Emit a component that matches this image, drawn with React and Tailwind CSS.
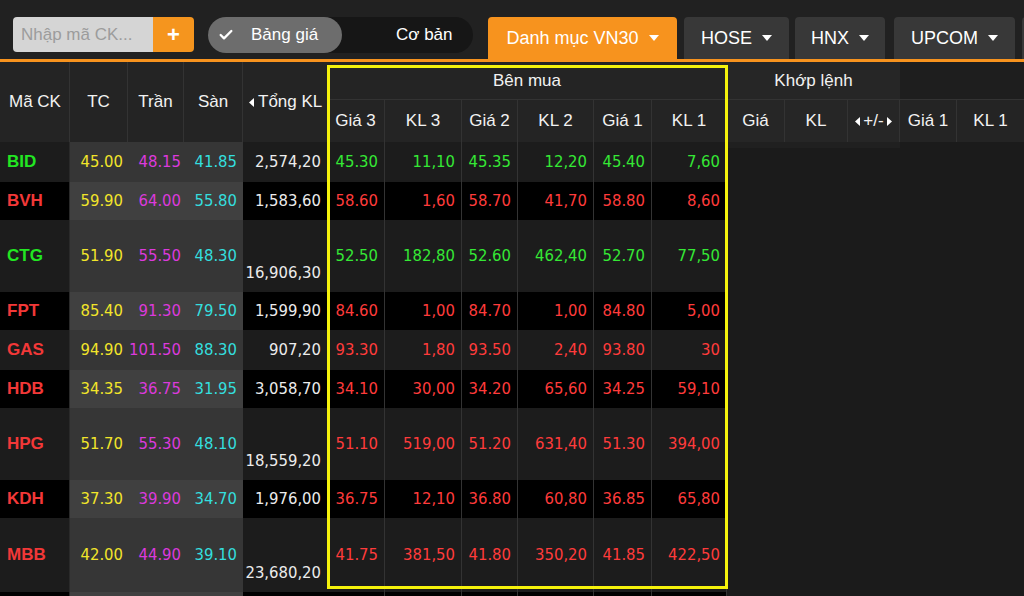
import React from "react";
import { Check } from "lucide-react";

const NUM = { fontFamily: "'DejaVu Sans Condensed', 'Liberation Sans', sans-serif" };
const SANS = { fontFamily: "'Liberation Sans', Arial, sans-serif" };

const rows = [
  { c: "BID", up: true, tc: "45.00", tr: "48.15", s: "41.85", kl: "2,574,20", b: ["45.30", "11,10", "45.35", "12,20", "45.40", "7,60"], h: 40 },
  { c: "BVH", up: false, tc: "59.90", tr: "64.00", s: "55.80", kl: "1,583,60", b: ["58.60", "1,60", "58.70", "41,70", "58.80", "8,60"], h: 38 },
  { c: "CTG", up: true, tc: "51.90", tr: "55.50", s: "48.30", kl: "16,906,30", b: ["52.50", "182,80", "52.60", "462,40", "52.70", "77,50"], h: 72, tall: true },
  { c: "FPT", up: false, tc: "85.40", tr: "91.30", s: "79.50", kl: "1,599,90", b: ["84.60", "1,00", "84.70", "1,00", "84.80", "5,00"], h: 38 },
  { c: "GAS", up: false, tc: "94.90", tr: "101.50", s: "88.30", kl: "907,20", b: ["93.30", "1,80", "93.50", "2,40", "93.80", "30"], h: 40 },
  { c: "HDB", up: false, tc: "34.35", tr: "36.75", s: "31.95", kl: "3,058,70", b: ["34.10", "30,00", "34.20", "65,60", "34.25", "59,10"], h: 38 },
  { c: "HPG", up: false, tc: "51.70", tr: "55.30", s: "48.10", kl: "18,559,20", b: ["51.10", "519,00", "51.20", "631,40", "51.30", "394,00"], h: 72, tall: true },
  { c: "KDH", up: false, tc: "37.30", tr: "39.90", s: "34.70", kl: "1,976,00", b: ["36.75", "12,10", "36.80", "60,80", "36.85", "65,80"], h: 38 },
  { c: "MBB", up: false, tc: "42.00", tr: "44.90", s: "39.10", kl: "23,680,20", b: ["41.75", "381,50", "41.80", "350,20", "41.85", "422,50"], h: 74, tall: true },
  { c: "", up: false, tc: "", tr: "", s: "", kl: "", b: ["", "", "", "", "", ""], h: 38 },
];

const buyW = ["w-[58px]", "w-[77px]", "w-[56px]", "w-[76px]", "w-[58px]", "w-[75px]"];
const buyH = ["Giá 3", "KL 3", "Giá 2", "KL 2", "Giá 1", "KL 1"];

function Caret() {
  return (
    <svg width="10" height="6" viewBox="0 0 10 6" className="ml-[10px] shrink-0">
      <polygon points="0,0 10,0 5,6" fill="white" />
    </svg>
  );
}
function TriL() {
  return (
    <svg width="5" height="9" viewBox="0 0 5 9" className="shrink-0">
      <polygon points="5,0 5,9 0,4.5" fill="white" />
    </svg>
  );
}
function TriR() {
  return (
    <svg width="5" height="9" viewBox="0 0 5 9" className="shrink-0">
      <polygon points="0,0 0,9 5,4.5" fill="white" />
    </svg>
  );
}

function Tab({ label, active, w, ml }) {
  return (
    <div
      className={`h-[42px] ${w} ${ml} shrink-0 rounded-t-[4px] flex items-center justify-center whitespace-nowrap text-[18px] text-white ${active ? "bg-[#f7931e]" : "bg-[#383838]"}`}
    >
      {label && <span>{label}</span>}
      {label && <Caret />}
    </div>
  );
}

export default function App() {
  return (
    <div className="w-[1024px] h-[596px] overflow-hidden bg-[#1b1b1b]" style={SANS}>
      {/* top bar */}
      <div className="h-[59px] bg-[#212121] flex items-start pt-[17px] pl-[13px] overflow-hidden">
        <div className="flex h-[35px] shrink-0">
          <div className="w-[140px] bg-[#d5d5d5] rounded-l-[4px] flex items-center pl-[8px] text-[17px] text-[#9c9c9c] whitespace-nowrap">
            Nhập mã CK...
          </div>
          <div className="w-[41px] bg-[#f5951e] rounded-r-[4px] flex items-center justify-center text-white text-[22px] font-bold">
            +
          </div>
        </div>
        <div className="ml-[14px] w-[265px] shrink-0 h-[36px] rounded-full bg-[#161616] flex items-center whitespace-nowrap">
          <div className="w-[134px] shrink-0 h-[36px] rounded-full bg-[#6d6d6d] flex items-center pl-[10px]">
            <Check size={16} strokeWidth={3.5} color="white" />
            <span className="ml-[17px] text-[17px] text-white">Bảng giá</span>
          </div>
          <span className="ml-[54px] text-[17px] text-white">Cơ bản</span>
        </div>
        <div className="ml-[15px] flex shrink-0">
          <Tab label="Danh mục VN30" active w="w-[189px]" ml="" />
          <Tab label="HOSE" w="w-[105px]" ml="ml-[7px]" />
          <Tab label="HNX" w="w-[90px]" ml="ml-[6px]" />
          <Tab label="UPCOM" w="w-[121px]" ml="ml-[9px]" />
          <Tab label="" w="w-[40px]" ml="ml-[7px]" />
        </div>
      </div>
      <div className="h-[3px] bg-[#f7931e]" />

      {/* table */}
      <div className="relative">
        {/* header */}
        <div className="flex h-[80px] bg-[#242424] text-[17px] text-[#f2f2f2] whitespace-nowrap">
          <div className="w-[70px] shrink-0 border-r border-[#333] flex items-center pl-[9px]">Mã CK</div>
          <div className="w-[58px] shrink-0 border-r border-[#333] flex items-center justify-center">TC</div>
          <div className="w-[56px] shrink-0 border-r border-[#333] flex items-center justify-center">Trần</div>
          <div className="w-[59px] shrink-0 border-r border-[#333] flex items-center justify-center">Sàn</div>
          <div className="w-[84px] shrink-0 flex items-center pl-[6px] gap-[4px] overflow-hidden">
            <TriL />
            <span>Tổng KL</span>
          </div>
          <div className="w-[400px] shrink-0 flex flex-col">
            <div className="h-[38px] border-b border-[#333] flex items-center justify-center">Bên mua</div>
            <div className="flex flex-1">
              {buyH.map((t, i) => (
                <div key={i} className={`${buyW[i]} border-r border-[#333] flex items-center justify-center`}>{t}</div>
              ))}
            </div>
          </div>
          <div className="w-[173px] shrink-0 flex flex-col bg-[#262626]">
            <div className="h-[38px] border-b border-[#333] flex items-center justify-center">Khớp lệnh</div>
            <div className="flex flex-1">
              <div className="w-[58px] border-r border-[#333] flex items-center justify-center">Giá</div>
              <div className="w-[63px] border-r border-[#333] flex items-center justify-center">KL</div>
              <div className="w-[52px] border-r border-[#333] flex items-center justify-center gap-[3px]">
                <TriL />
                <span>+/-</span>
                <TriR />
              </div>
            </div>
          </div>
          <div className="w-[124px] shrink-0 flex flex-col">
            <div className="h-[38px] border-b border-[#333] bg-[#1e1e1e]" />
            <div className="flex flex-1">
              <div className="w-[57px] border-r border-[#333] flex items-center justify-center">Giá 1</div>
              <div className="w-[67px] flex items-center justify-center">KL 1</div>
            </div>
          </div>
        </div>
        <div className="flex">
          <div className="w-[727px]" />
          <div className="w-[173px] h-[6px] bg-[#202020]" />
        </div>

        {/* body */}
        <div className="-mt-[6px] w-[727px] text-[16.5px]" style={NUM}>
          {rows.map((r, i) => {
            const even = i % 2 === 0;
            const bg = even ? "bg-[#1c1c1c]" : "bg-black";
            const mid = even ? "bg-[#363636]" : "bg-[#404040]";
            const col = r.up ? "text-[#35e835]" : "text-[#ff3b3b]";
            return (
              <div key={i} className={`flex ${bg}`} style={{ height: r.h }}>
                <div
                  className={`w-[70px] border-r border-[#2a2a2a] flex items-center pl-[7px] font-bold text-[17px] ${r.up ? "text-[#22e622]" : "text-[#f23838]"}`}
                  style={SANS}
                >
                  {r.c}
                </div>
                <div className={`w-[58px] ${mid} flex items-center justify-end pr-[5px] text-[#f2e52a]`}>{r.tc}</div>
                <div className={`w-[56px] ${mid} flex items-center justify-end pr-[3px] text-[#dc3adc] whitespace-nowrap`}>{r.tr}</div>
                <div className={`w-[59px] ${mid} flex items-center justify-end pr-[6px] text-[#34dede]`}>{r.s}</div>
                <div
                  className={`w-[84px] flex ${r.tall ? "items-end pb-[6px]" : "items-center"} justify-end pr-[6px] text-[#ececec]`}
                >
                  {r.kl}
                </div>
                {r.b.map((v, j) => (
                  <div key={j} className={`${buyW[j]} border-r border-[#333] flex items-center justify-end pr-[6px] ${col}`}>
                    {v}
                  </div>
                ))}
              </div>
            );
          })}
        </div>

        {/* yellow highlight */}
        <div className="absolute left-[327px] top-[3px] w-[401px] h-[524px] border-[3px] border-[#f5f20c] pointer-events-none" />
      </div>
    </div>
  );
}
